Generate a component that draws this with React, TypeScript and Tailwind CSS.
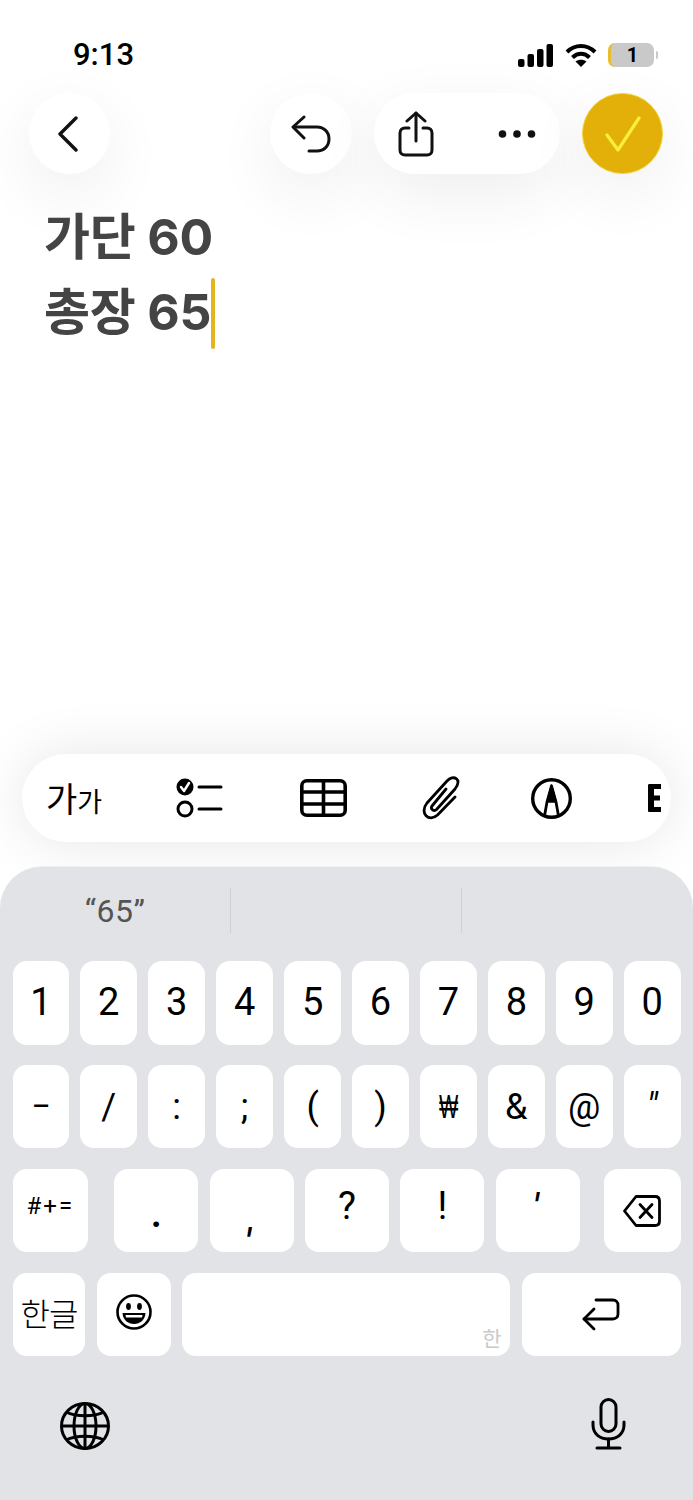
import React from "react";

const SANS = "font-['Roboto','Noto_Sans_CJK_KR',sans-serif]";

function Key({ w, children, className = "" }: { w?: string; children?: React.ReactNode; className?: string }) {
  return (
    <div className={`relative flex h-full items-center justify-center rounded-[14px] bg-white text-black ${w ?? "flex-1"} ${className}`}>
      {children}
    </div>
  );
}

function Row({ children, gap = "gap-[11.2px]" }: { children: React.ReactNode; gap?: string }) {
  return <div className={`flex h-[83.5px] ${gap}`}>{children}</div>;
}

const Chevron = () => (
  <svg className="mr-[4px]" width="24" height="36" viewBox="0 0 24 36" fill="none" stroke="#111" strokeWidth="3.4" strokeLinecap="round" strokeLinejoin="round">
    <path d="M20 2 L4 18 L20 34" />
  </svg>
);

const Undo = () => (
  <svg width="40" height="38" viewBox="0 0 40 38" fill="none" stroke="#111" strokeWidth="3" strokeLinecap="round" strokeLinejoin="round">
    <path d="M13 2 L2 12 L13 23" />
    <path d="M3 12 H26 C33 12 38 17 38 24 C38 31 33 36 26 36 H18" />
  </svg>
);

const Share = () => (
  <svg width="36" height="46" viewBox="0 0 36 46" fill="none" stroke="#111" strokeWidth="3" strokeLinecap="round" strokeLinejoin="round">
    <path d="M18 30 V2" />
    <path d="M9 10 L18 2 L27 10" />
    <path d="M11 17 H7 C4 17 2 19 2 22 V39 C2 42 4 44 7 44 H29 C32 44 34 42 34 39 V22 C34 19 32 17 29 17 H25" />
  </svg>
);

const Dots = () => (
  <svg width="38" height="10" viewBox="0 0 38 10" fill="#111">
    <circle cx="4.5" cy="5" r="3.8" />
    <circle cx="19" cy="5" r="3.8" />
    <circle cx="33.5" cy="5" r="3.8" />
  </svg>
);

const Check = () => (
  <svg width="36" height="36" viewBox="0 0 36 36" fill="none" stroke="#fbee3f" strokeWidth="3.2" strokeLinecap="round" strokeLinejoin="round">
    <path d="M2 19 L13 34 L34 2" />
  </svg>
);

const Checklist = () => (
  <svg width="47" height="40" viewBox="0 0 47 40" fill="none" stroke="#000" strokeLinecap="round">
    <circle cx="9" cy="9" r="8.5" fill="#000" stroke="none" />
    <path d="M5 9 L8 13 L13 5" stroke="#fff" strokeWidth="2.4" strokeLinejoin="round" />
    <circle cx="9" cy="31" r="7" strokeWidth="3" />
    <path d="M23 9 H45 M23 31 H45" strokeWidth="3" />
  </svg>
);

const Table = () => (
  <svg width="47" height="38" viewBox="0 0 47 38" fill="none" stroke="#000" strokeWidth="3.6">
    <rect x="1.8" y="1.8" width="43.4" height="34.4" rx="5" />
    <path d="M23.5 2 V36 M2 13 H45 M2 25 H45" />
  </svg>
);

const Clip = () => (
  <svg width="40" height="44" viewBox="0 0 40 44" fill="none" stroke="#000" strokeWidth="2.8" strokeLinecap="round" strokeLinejoin="round">
    <path d="M24 13 L10 30 C8 33 12 36 14.5 33.5 L33 13 C41 3 31 -2 25 5 L5 27 C-3 37 7 47 15.5 39 L33 21" />
  </svg>
);

const Markup = () => (
  <svg width="41" height="41" viewBox="0 0 41 41" fill="none" stroke="#000" strokeWidth="3.4" strokeLinejoin="round">
    <circle cx="20.5" cy="20.5" r="18.8" />
    <path d="M13.5 38 L16 24 L20.5 8 L25 24 L27.5 38" strokeWidth="2.8" />
    <path d="M20.5 7 L16 24 H25 Z" fill="#000" strokeWidth="1.5" />
  </svg>
);

const StyleE = () => (
  <svg width="13" height="28" viewBox="0 0 13 28" fill="#000">
    <path d="M1.5 0 H13 V5 H6 V11.5 H12 V16.5 H6 V23 H13 V28 H1.5 C0.5 28 0 27.5 0 26.5 V1.5 C0 0.5 0.5 0 1.5 0 Z" />
  </svg>
);

const Signal = () => (
  <svg width="35" height="23" viewBox="0 0 35 23" fill="#000">
    <rect x="0" y="15" width="6.5" height="8" rx="2" />
    <rect x="9.5" y="10" width="6.5" height="13" rx="2" />
    <rect x="19" y="5" width="6.5" height="18" rx="2" />
    <rect x="28.5" y="0" width="6.5" height="23" rx="2" />
  </svg>
);

const Wifi = () => (
  <svg width="32" height="23" viewBox="0 0 32 23" fill="none" stroke="#000" strokeWidth="4">
    <path d="M2 8 C10 0 22 0 30 8" />
    <path d="M7.5 13.5 C12.5 8.5 19.5 8.5 24.5 13.5" />
    <path d="M16 23 L10.5 17.5 C13.5 15 18.5 15 21.5 17.5 Z" fill="#000" stroke="none" />
  </svg>
);

const Backspace = () => (
  <svg width="38" height="32" viewBox="0 0 38 32" fill="none" stroke="#000" strokeWidth="2.8" strokeLinejoin="round" strokeLinecap="round">
    <path d="M13 1.5 H32 C35 1.5 36.5 3 36.5 6 V26 C36.5 29 35 30.5 32 30.5 H13 L1.5 16 Z" />
    <path d="M17 9.5 L29 22.5 M29 9.5 L17 22.5" />
  </svg>
);

const Return = () => (
  <svg width="38" height="33" viewBox="0 0 38 33" fill="none" stroke="#000" strokeWidth="2.8" strokeLinecap="round" strokeLinejoin="round">
    <path d="M14 2 H31 C34 2 36 4 36 7 V16 C36 19 34 21 31 21 H2" />
    <path d="M12 11 L2 21 L12 31" />
  </svg>
);

const Smile = () => (
  <svg className="mb-[5px]" width="36" height="36" viewBox="0 0 36 36">
    <circle cx="18" cy="18" r="16.5" fill="none" stroke="#000" strokeWidth="2.6" />
    <ellipse cx="12.5" cy="12.5" rx="2.4" ry="3.4" fill="#000" />
    <ellipse cx="23.5" cy="12.5" rx="2.4" ry="3.4" fill="#000" />
    <path d="M6.5 19 H29.5 C29 26 24 30 18 30 C12 30 7 26 6.5 19 Z" fill="#000" />
    <path d="M9.5 21 H26.5 L26 23.5 H10 Z" fill="#fff" />
  </svg>
);

const Globe = () => (
  <svg className="mt-[4px]" width="50" height="48" viewBox="0 0 50 48" fill="none" stroke="#000" strokeWidth="3">
    <ellipse cx="25" cy="24" rx="23.5" ry="22.5" />
    <ellipse cx="25" cy="24" rx="11" ry="22.5" />
    <path d="M25 1.5 V46.5 M1.5 24 H48.5" />
    <path d="M6 10 C16 15 34 15 44 10 M6 38 C16 33 34 33 44 38" />
  </svg>
);

const Mic = () => (
  <svg width="35" height="52" viewBox="0 0 35 52" fill="none" stroke="#000" strokeWidth="3" strokeLinecap="round">
    <rect x="10" y="1.5" width="15" height="32" rx="7.5" />
    <path d="M2 24 V27 C2 36 9 41 17.5 41 C26 41 33 36 33 27 V24" />
    <path d="M17.5 41 V50 M6 50 H29" />
  </svg>
);

export default function App() {
  const row1 = ["1", "2", "3", "4", "5", "6", "7", "8", "9", "0"];
  const circle = "flex items-center justify-center rounded-full bg-white shadow-[0_20px_64px_rgba(0,0,0,0.07)]";
  return (
    <div className={`flex h-[1500px] w-[693px] flex-col overflow-hidden bg-white ${SANS}`}>
      <div className="flex h-[93px] items-start justify-between pl-[73px] pr-[35px] pt-[41px]">
        <span className="text-[31px] font-medium leading-[28px] text-black">9:13</span>
        <div className="flex items-center pt-[2px]">
          <Signal />
          <div className="ml-[12px]"><Wifi /></div>
          <div className="ml-[11px] flex h-[24px] w-[46px] items-center justify-center overflow-hidden rounded-[7px] border-l-[3px] border-[#e6be2e] bg-[#c9c9c9] text-[20px] font-bold text-black">1</div>
          <div className="ml-[2px] h-[8px] w-[2px] rounded-r bg-[#c9c9c9]" />
        </div>
      </div>

      <div className="flex h-[81px] items-center pl-[29px] pr-[30px]">
        <div className={`h-[81px] w-[81px] ${circle}`}><Chevron /></div>
        <div className={`ml-[160px] h-[81px] w-[82px] ${circle}`}><Undo /></div>
        <div className={`ml-[22px] h-[81px] w-[186px] justify-between! px-[24px] ${circle}`}><Share /><Dots /></div>
        <div className="ml-[22px] flex h-[81px] w-[81px] items-center justify-center rounded-full border border-[#f3d53a] bg-[#e2b009] shadow-[0_20px_64px_rgba(0,0,0,0.07)]"><Check /></div>
      </div>

      <div className="pl-[44px] pt-[26px] font-['Inter','Noto_Sans_CJK_KR',sans-serif] text-[50px] font-bold leading-[75px] tracking-[-0.2px] text-[#444444]">
        <div>가단 60</div>
        <div className="flex items-center">
          <span>총장 65</span>
          <span className="mt-[2px] h-[71px] w-[4px] rounded-full bg-[#e2b521]" />
        </div>
      </div>

      <div className="flex-1" />

      <div className="mx-[22px] flex h-[88px] items-center overflow-hidden rounded-full bg-white pl-[24px] shadow-[0_0_56px_rgba(0,0,0,0.1)]">
        <div className="flex w-[58px] items-baseline whitespace-nowrap font-['Noto_Sans_CJK_KR',sans-serif] leading-none text-black">
          <span className="text-[34px]">가</span>
          <span className="text-[27px]">가</span>
        </div>
        <div className="ml-[72px]"><Checklist /></div>
        <div className="ml-[77px]"><Table /></div>
        <div className="ml-[75px]"><Clip /></div>
        <div className="ml-[69px]"><Markup /></div>
        <div className="ml-[76px]"><StyleE /></div>
      </div>

      <div className="mt-[24px] h-[634px] rounded-t-[42px] border-t border-[#eef0f2] bg-[#e1e3e6]">
        <div className="relative flex h-[94px] items-start">
          <div className="mt-[21px] flex h-[45px] w-[231px] items-center justify-center border-r border-[#cfd0d4] text-[32px] leading-none tracking-[0.5px] text-[#555]">“65”</div>
          <div className="mt-[21px] h-[45px] w-[231px] border-r border-[#cfd0d4]" />
        </div>
        <div className="flex flex-col gap-[20.4px] px-[12.5px]">
          <Row>
            {row1.map((k) => <Key key={k} className="text-[38px] font-normal">{k}</Key>)}
          </Row>
          <Row>
            <Key className="text-[28px] font-medium">–</Key>
            <Key className="text-[36px]">/</Key>
            <Key className="text-[36px]">:</Key>
            <Key className="text-[36px]">;</Key>
            <Key className="text-[36px]">(</Key>
            <Key className="text-[36px]">)</Key>
            <Key className="text-[33px]"><span className="inline-block scale-x-[0.62] font-['Liberation_Sans',sans-serif]">₩</span></Key>
            <Key className="text-[36px]">&amp;</Key>
            <Key className="text-[36px]">@</Key>
            <Key className="text-[36px] italic">"</Key>
          </Row>
          <Row gap="gap-0">
            <Key w="w-[76px]" className="pb-[10px] text-[24px] tracking-[2px]">#+=</Key>
            <div className="ml-[26px] flex gap-[11.4px]">
              <Key w="w-[84px]" className="pt-[4px] text-[42px] font-medium">.</Key>
              <Key w="w-[84px]" className="pr-[8px] pt-[66px] text-[38px] font-medium italic">'</Key>
              <Key w="w-[84px]" className="pb-[8px] text-[38px]">?</Key>
              <Key w="w-[84px]" className="pb-[8px] text-[38px]">!</Key>
              <Key w="w-[84px]" className="pb-[8px] pr-[4px] text-[36px] font-medium italic">'</Key>
            </div>
            <Key w="w-[77px] ml-[24px]"><Backspace /></Key>
          </Row>
          <Row>
            <Key w="w-[73px]" className="whitespace-nowrap pb-[4px] font-['Noto_Sans_CJK_KR',sans-serif] text-[32px] font-light tracking-[-1px]">한글</Key>
            <Key w="w-[74px]"><Smile /></Key>
            <Key w="w-[329px]">
              <span className="absolute bottom-[4px] right-[9px] font-['Noto_Sans_CJK_KR',sans-serif] text-[21px] leading-[30px] text-[#c9c9c9]">한</span>
            </Key>
            <Key w="w-[159px]"><Return /></Key>
          </Row>
        </div>
        <div className="flex items-center justify-between pl-[60px] pr-[67px] pt-[42px]">
          <Globe />
          <Mic />
        </div>
      </div>
    </div>
  );
}
